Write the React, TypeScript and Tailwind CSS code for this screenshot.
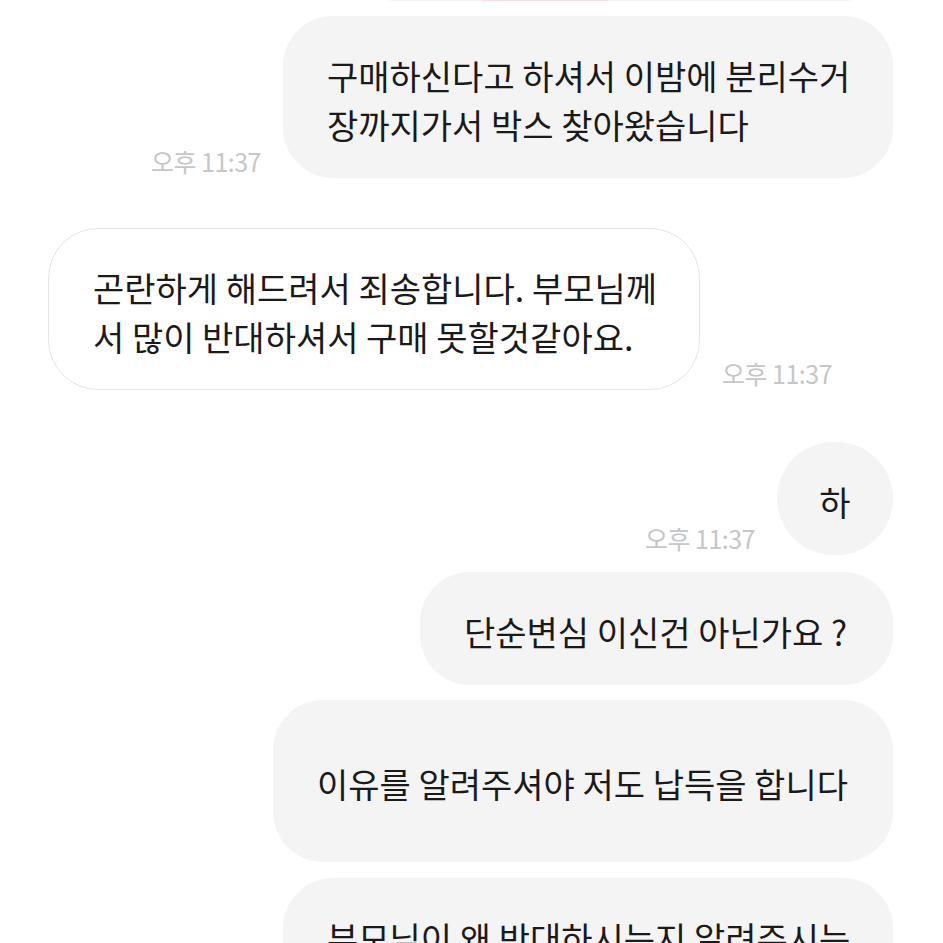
import React from "react";

type Msg = {
  lines: string[];
  mine: boolean;
  time?: string;
  w: string;
  h: string;
  mt: string;
  round?: string;
};

const messages: Msg[] = [
  {
    lines: ["구매하신다고 하셔서 이밤에 분리수거", "장까지가서 박스 찾아왔습니다"],
    mine: true,
    time: "오후 11:37",
    w: "w-[610px]",
    h: "h-[162px]",
    mt: "mt-[15px]",
  },
  {
    lines: ["곤란하게 해드려서 죄송합니다. 부모님께", "서 많이 반대하셔서 구매 못할것같아요."],
    mine: false,
    time: "오후 11:37",
    w: "w-[652px]",
    h: "h-[162px]",
    mt: "mt-[50px]",
  },
  {
    lines: ["하"],
    mine: true,
    time: "오후 11:37",
    w: "w-[116px]",
    h: "h-[113px]",
    mt: "mt-[52px]",
    round: "rounded-full justify-center",
  },
  {
    lines: ["단순변심 이신건 아닌가요 ?"],
    mine: true,
    w: "w-[473px]",
    h: "h-[113px]",
    mt: "mt-[17px]",
  },
  {
    lines: ["이유를 알려주셔야 저도 납득을 합니다"],
    mine: true,
    w: "w-[620px]",
    h: "h-[162px]",
    mt: "mt-[15px]",
  },
  {
    lines: ["부모님이 왜 반대하시는지 알려주시는", "건 안될까요"],
    mine: true,
    w: "w-[610px]",
    h: "h-[162px]",
    mt: "mt-[16px]",
  },
];

const Time = ({ text }: { text: string }) => (
  <span className="mb-[4px] whitespace-nowrap text-[25px] leading-none text-[#c6c6c6] tracking-[-0.5px]">
    {text}
  </span>
);

const Bubble = ({ msg }: { msg: Msg }) => {
  const look = msg.mine
    ? "bg-[#f4f4f4]"
    : "bg-white border-[1.5px] border-[#e4e4e4]";
  return (
    <div
      className={`${msg.w} ${msg.h} ${look} ${
        msg.round ?? "rounded-[50px] px-[44px]"
      } flex shrink-0 items-center pt-[5px]`}
    >
      <p className="whitespace-nowrap text-[34px] leading-[49px] text-[#1a1a1a]">
        {msg.lines.map((l, i) => (
          <React.Fragment key={i}>
            {l}
            {i < msg.lines.length - 1 && <br />}
          </React.Fragment>
        ))}
      </p>
    </div>
  );
};

export default function App() {
  return (
    <div
      className="w-[943px] h-[943px] overflow-hidden bg-white flex flex-col pl-[48px] pr-[50px]"
      style={{ fontFamily: '"Noto Sans CJK KR", "Noto Sans", sans-serif' }}
    >
      {/* bottom edge of the previous bubble */}
      <div className="ml-auto mr-[43px] w-[460px] h-[3px] rounded-b-full bg-[#f4f4f4] flex">
        <div className="ml-[92px] w-[126px] h-[1px] bg-[#fbdde3]" />
      </div>

      {messages.map((m, i) => (
        <div
          key={i}
          className={`${m.mt} flex items-end gap-[22px] ${
            m.mine ? "justify-end" : "justify-start"
          }`}
        >
          {m.mine && m.time && <Time text={m.time} />}
          <Bubble msg={m} />
          {!m.mine && m.time && <Time text={m.time} />}
        </div>
      ))}
    </div>
  );
}
